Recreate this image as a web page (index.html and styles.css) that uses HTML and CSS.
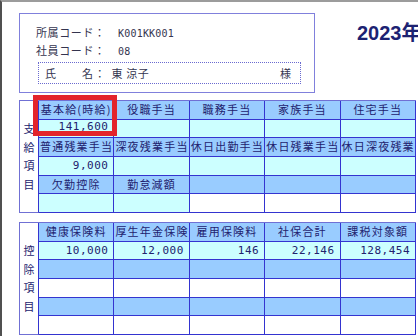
FILE: index.html
```html
<!DOCTYPE html>
<html lang="ja">
<head>
<meta charset="utf-8">
<title>給与明細</title>
<link rel="stylesheet" href="styles.css">
</head>
<body>
<div class="frame">
  <div class="top">
    <div class="idbox">
      <div class="line"><span class="lbl">所属コード：</span><span class="val">K001KK001</span></div>
      <div class="line"><span class="lbl">社員コード：</span><span class="val">08</span></div>
      <div class="namebox"><span class="name">氏　　名：<span class="nm">東 涼子</span></span><span class="sama">様</span></div>
    </div>
    <div class="title">2023年</div>
  </div>

  <div class="grid pay">
    <div class="side">支<br>給<br>項<br>目</div>
    <div class="c h">基本給(時給)</div>
    <div class="c h">役職手当</div>
    <div class="c h">職務手当</div>
    <div class="c h">家族手当</div>
    <div class="c h">住宅手当</div>
    <div class="c v num hi">141,600</div>
    <div class="c v"></div>
    <div class="c v"></div>
    <div class="c v"></div>
    <div class="c v"></div>
    <div class="c h">普通残業手当</div>
    <div class="c h">深夜残業手当</div>
    <div class="c h">休日出勤手当</div>
    <div class="c h">休日残業手当</div>
    <div class="c h">休日深夜残業手当</div>
    <div class="c v num">9,000</div>
    <div class="c v"></div>
    <div class="c v"></div>
    <div class="c v"></div>
    <div class="c v"></div>
    <div class="c h">欠勤控除</div>
    <div class="c h">勤怠減額</div>
    <div class="c h"></div>
    <div class="c h"></div>
    <div class="c h"></div>
    <div class="c v"></div>
    <div class="c v"></div>
    <div class="c w"></div>
    <div class="c w"></div>
    <div class="c w"></div>
    <div class="mark"></div>
  </div>

  <div class="grid ded">
    <div class="side">控<br>除<br>項<br>目</div>
    <div class="c h">健康保険料</div>
    <div class="c h">厚生年金保険</div>
    <div class="c h">雇用保険料</div>
    <div class="c h">社保合計</div>
    <div class="c h">課税対象額</div>
    <div class="c v num">10,000</div>
    <div class="c v num">12,000</div>
    <div class="c v num">146</div>
    <div class="c v num">22,146</div>
    <div class="c v num">128,454</div>
    <div class="c h"></div>
    <div class="c h"></div>
    <div class="c h"></div>
    <div class="c h"></div>
    <div class="c h"></div>
    <div class="c w"></div>
    <div class="c w"></div>
    <div class="c w"></div>
    <div class="c w"></div>
    <div class="c w"></div>
    <div class="c h"></div>
    <div class="c h"></div>
    <div class="c h"></div>
    <div class="c h"></div>
    <div class="c h"></div>
    <div class="c w"></div>
    <div class="c w"></div>
    <div class="c w"></div>
    <div class="c w"></div>
    <div class="c w"></div>
  </div>
</div>
</body>
</html>
```

FILE: styles.css
```css
html, body {
  margin: 0;
  padding: 0;
  background: #ffffff;
}
body {
  width: 418px;
  height: 336px;
  overflow: hidden;
  font-family: "Noto Sans CJK JP", "Noto Sans", sans-serif;
}
.frame {
  box-sizing: border-box;
  height: 336px;
  border-top: 2px solid #9c9c9c;
  border-left: 2px solid #505050;
  padding: 11px 0 0 17px;
}

/* top area */
.top {
  display: flex;
  align-items: flex-start;
  height: 80px;
}
.idbox {
  box-sizing: border-box;
  width: 296px;
  height: 80px;
  border: 1px solid #8080dc;
  padding: 9px 13px 0 16px;
  color: #34344f;
  font-size: 11px;
}
.line {
  height: 18px;
  line-height: 18px;
  white-space: nowrap;
}
.lbl {
  display: inline-block;
  width: 82px;
  letter-spacing: 0.6px;
}
.val {
  font-family: "DejaVu Sans Mono", monospace;
  font-size: 10px;
  letter-spacing: 0.2px;
}
.namebox {
  box-sizing: border-box;
  margin: 3px 0 0 2px;
  width: 263px;
  height: 22px;
  border: 1px dotted #6a6ad0;
  padding: 0 9px 0 6px;
  line-height: 20px;
  display: flex;
  justify-content: space-between;
  white-space: nowrap;
}
.name {
  letter-spacing: 1.3px;
}
.nm {
  margin-left: 5px;
  letter-spacing: 0.6px;
}
.title {
  margin: 8px 0 0 42px;
  font-family: "Liberation Sans", "Noto Sans CJK JP", sans-serif;
  font-weight: bold;
  font-size: 20px;
  line-height: 24px;
  color: #1c2272;
  white-space: nowrap;
}

/* tables */
.grid {
  position: relative;
  box-sizing: border-box;
  width: 397px;
  height: 113px;
  display: grid;
  grid-template-columns: 19px repeat(5, 1fr);
  grid-template-rows: repeat(6, 1fr);
  border-top: 1px solid #7070d4;
  border-left: 1px solid #7070d4;
  color: #22226e;
  font-size: 11px;
}
.pay {
  margin-top: 7px;
}
.ded {
  margin-top: 9px;
  height: 113px;
}
.side {
  grid-row: 1 / span 6;
  background: #ffffff;
  border-right: 1px solid #3434d0;
  border-bottom: 1px solid #7070d4;
  display: flex;
  align-items: center;
  justify-content: center;
  text-align: center;
  line-height: 18.67px;
}
.c {
  min-width: 0;
  border-right: 1px solid #3434d0;
  border-bottom: 1px solid #3434d0;
  overflow: hidden;
  white-space: nowrap;
  text-align: center;
  letter-spacing: 1.2px;
  line-height: 17.5px;
  padding: 0 1px;
}
.h { background: #99ccff; }
.v { background: #ccffff; }
.w { background: #ffffff; }
.num {
  text-align: right;
  padding-right: 5px;
  font-family: "DejaVu Sans Mono", monospace;
  font-size: 11px;
  letter-spacing: 0.5px;
}
.hi {
  line-height: 13px;
}
.mark {
  position: absolute;
  left: 13px;
  top: -6px;
  width: 84px;
  height: 41px;
  box-sizing: border-box;
  border: 5px solid #e3242b;
}
```
